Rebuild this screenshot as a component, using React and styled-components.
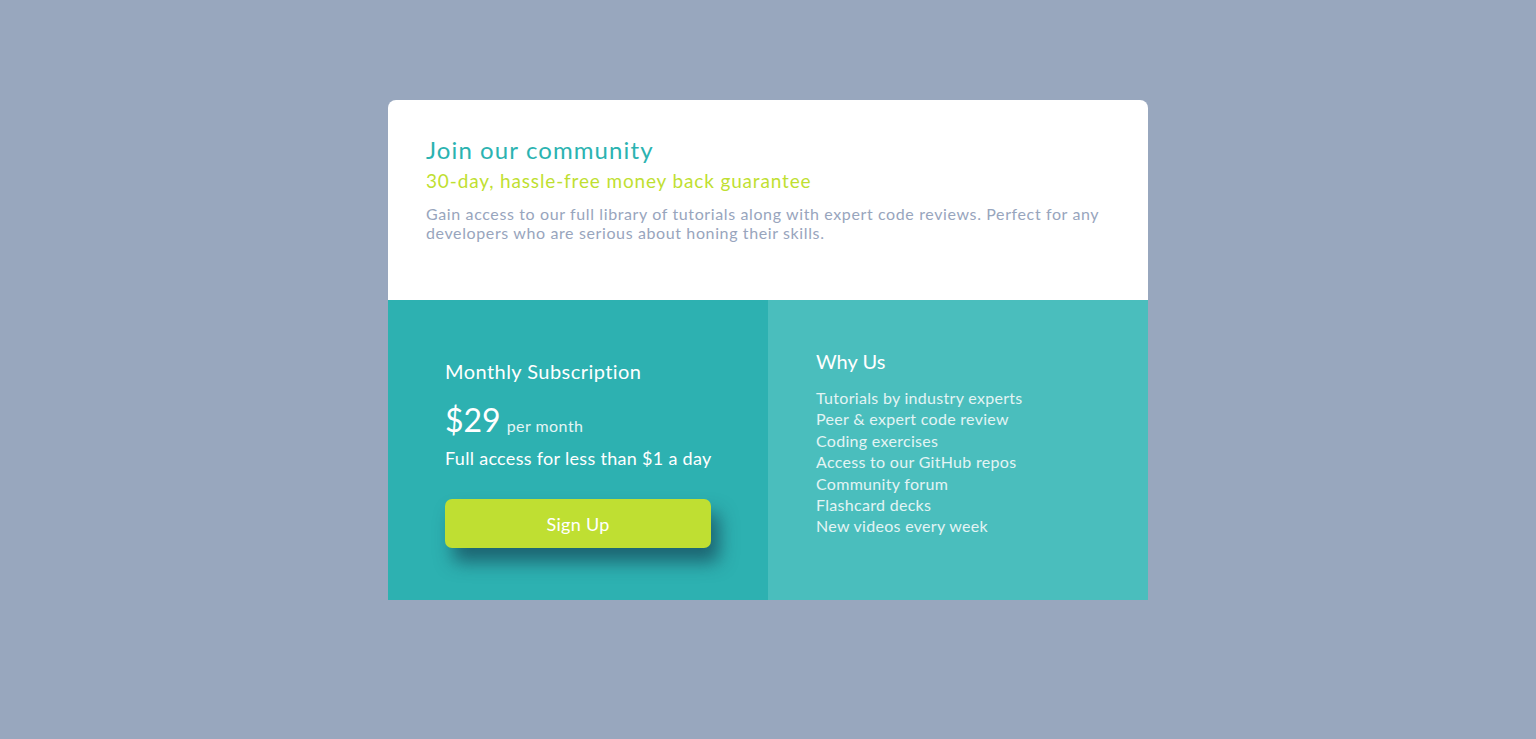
import React from 'react';
import styled, { createGlobalStyle } from 'styled-components';

const GlobalStyle = createGlobalStyle`
  * { box-sizing: border-box; }
  body {
    margin: 0;
    background: #98a7be;
    font-family: Lato, "Noto Sans", sans-serif;
  }
`;

const Page = styled.main`
  min-height: 739px;
  display: flex;
  justify-content: center;
  padding-top: 100px;
`;

const Card = styled.section`
  width: 760px;
  border-radius: 8px;
  overflow: hidden;
  display: grid;
  grid-template-columns: 1fr 1fr;
  grid-template-rows: 200px 300px;
`;

const Top = styled.div`
  grid-column: 1 / 3;
  background: #fff;
  padding: 34px 38px 0;
`;

const Title = styled.h1`
  margin: 0;
  font-size: 24px;
  font-weight: 400;
  line-height: 32px;
  letter-spacing: 1.1px;
  color: #2bb3b1;
`;

const Guarantee = styled.h2`
  margin: 3px 0 0;
  font-size: 19px;
  font-weight: 400;
  line-height: 24px;
  letter-spacing: 0.85px;
  color: #bfdf32;
`;

const Lead = styled.p`
  margin: 11px 0 0;
  font-size: 16px;
  line-height: 19px;
  letter-spacing: 0.62px;
  color: #98a5bd;
`;

const Panel = styled.div`
  background: ${p => p.tone};
  color: #fff;
  padding: ${p => p.pad};
`;

const PanelTitle = styled.h3`
  margin: 0;
  font-size: 20px;
  font-weight: 400;
  line-height: 24px;
  letter-spacing: ${p => p.spacing || '0'};
`;

const PriceRow = styled.div`
  display: flex;
  align-items: baseline;
  gap: 6px;
  margin-top: 18px;
`;

const Price = styled.span`
  font-size: 32px;
  line-height: 38px;
`;

const Per = styled.span`
  font-size: 16px;
  letter-spacing: 0.45px;
  color: #e4f5f5;
`;

const Note = styled.p`
  margin: 7px 0 0;
  font-size: 18px;
  line-height: 24px;
  letter-spacing: 0.3px;
  white-space: nowrap;
`;

const Button = styled.button`
  display: block;
  width: 266px;
  height: 49px;
  margin-top: 29px;
  border: 0;
  border-radius: 7px;
  background: #bfdf32;
  color: #fff;
  font: inherit;
  font-size: 18px;
  letter-spacing: 0.3px;
  box-shadow: 8px 14px 18px rgba(20, 60, 80, 0.65);
`;

const List = styled.ul`
  list-style: none;
  margin: 14px 0 0;
  padding: 0;
  font-size: 16px;
  line-height: 21.4px;
  letter-spacing: 0.3px;
  color: #e3f4f4;
`;

const features = [
  'Tutorials by industry experts',
  'Peer & expert code review',
  'Coding exercises',
  'Access to our GitHub repos',
  'Community forum',
  'Flashcard decks',
  'New videos every week',
];

export default function App() {
  return (
    <>
      <GlobalStyle />
      <Page>
        <Card>
          <Top>
            <Title>Join our community</Title>
            <Guarantee>30-day, hassle-free money back guarantee</Guarantee>
            <Lead>
              Gain access to our full library of tutorials along with expert code reviews. Perfect for any
              developers who are serious about honing their skills.
            </Lead>
          </Top>
          <Panel tone="#2db1b1" pad="59px 40px 0 57px">
            <PanelTitle spacing="0.45px">Monthly Subscription</PanelTitle>
            <PriceRow>
              <Price>$29</Price>
              <Per>per month</Per>
            </PriceRow>
            <Note>Full access for less than $1 a day</Note>
            <Button>Sign Up</Button>
          </Panel>
          <Panel tone="#4abebd" pad="49px 48px 0">
            <PanelTitle>Why Us</PanelTitle>
            <List>
              {features.map(f => <li key={f}>{f}</li>)}
            </List>
          </Panel>
        </Card>
      </Page>
    </>
  );
}
